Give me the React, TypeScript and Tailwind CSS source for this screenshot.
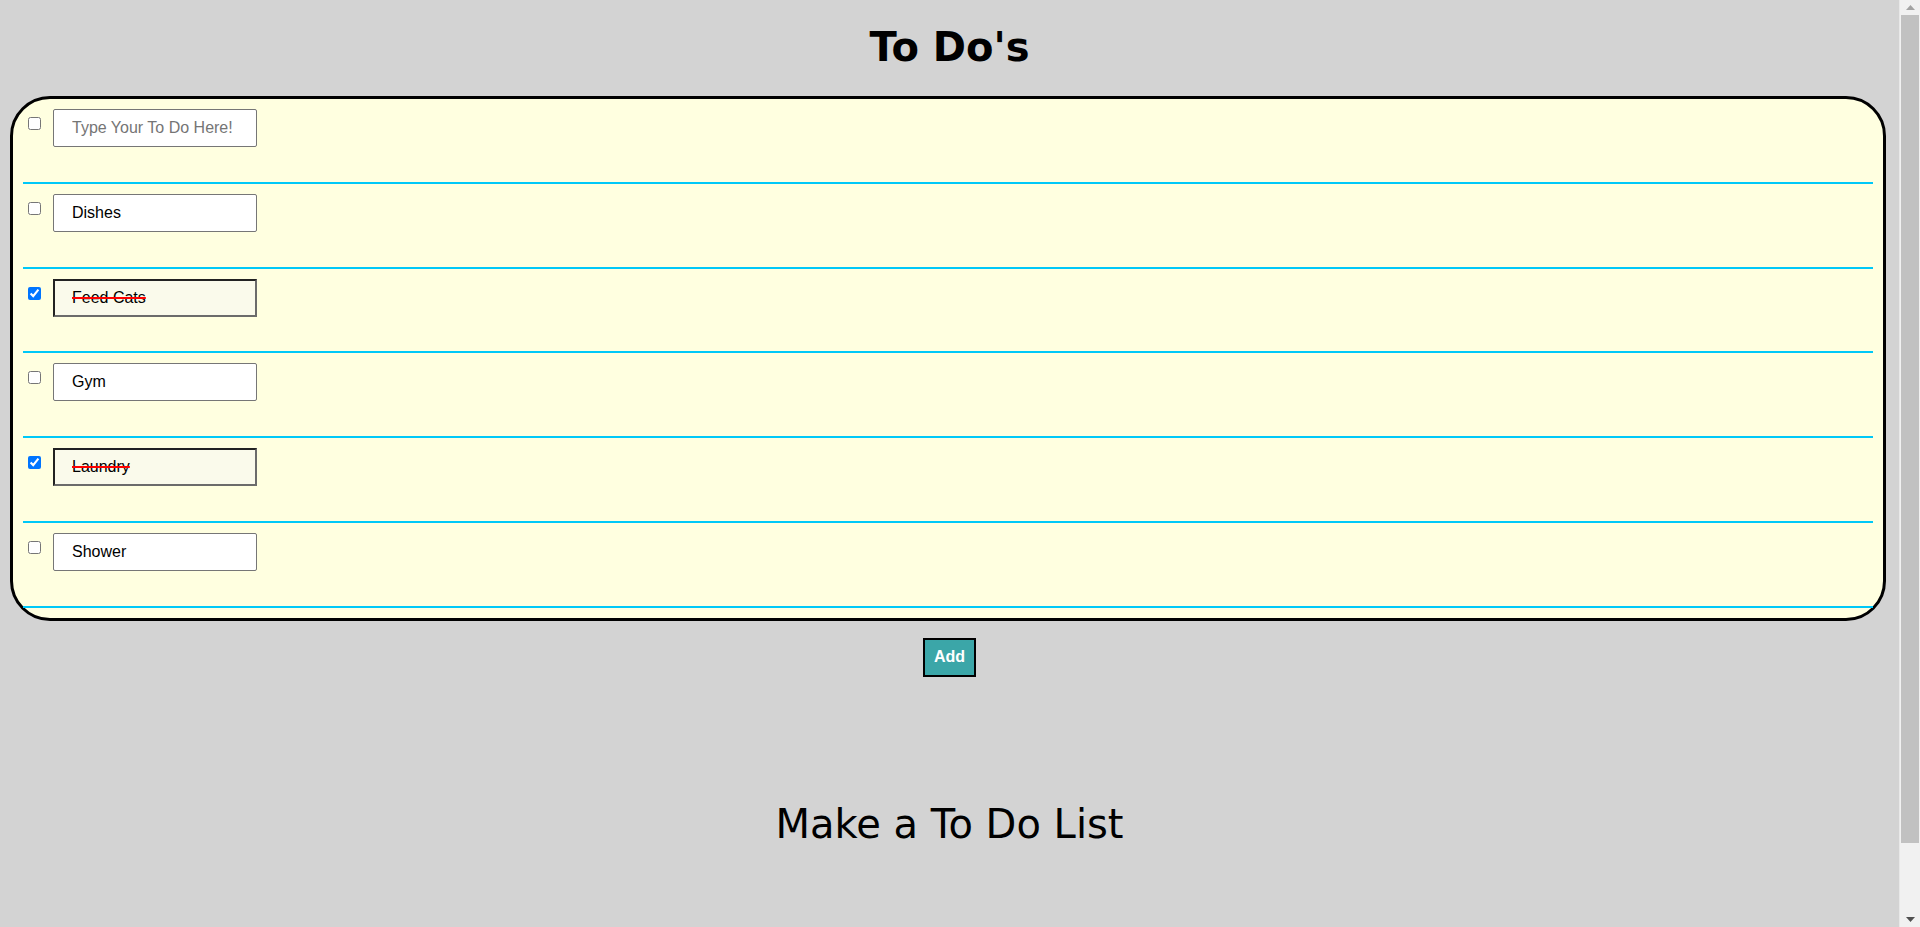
import React, { useState } from 'react';

interface Todo {
    id: number;
    text: string;
    done: boolean;
}

const START: Todo[] = [
    { id: 1, text: 'Dishes', done: false },
    { id: 2, text: 'Feed Cats', done: true },
    { id: 3, text: 'Gym', done: false },
    { id: 4, text: 'Laundry', done: true },
    { id: 5, text: 'Shower', done: false },
];

interface RowProps {
    todo?: Todo;
    onToggle?: () => void;
    onChange?: (text: string) => void;
}

const TodoRow = ({ todo, onToggle, onChange }: RowProps) => {
    const done = todo?.done ?? false;
    return (
        <div className="flex items-start pt-[10px] pb-[34.8px] border-b-2 border-[#00c8f8]">
            <input
                type="checkbox"
                checked={done}
                onChange={onToggle}
                className="m-0 mt-[8px] ml-[5px] w-[13px] h-[13px]"
            />
            <input
                type="text"
                value={todo ? todo.text : undefined}
                onChange={(e) => onChange && onChange(e.target.value)}
                placeholder={todo ? undefined : 'Type Your To Do Here!'}
                className={
                    done
                        ? 'ml-[12px] w-[204px] h-[38px] pl-[17px] border-2 border-t-[#222] border-l-[#222] border-b-[#6b6b6b] border-r-[#6b6b6b] bg-[#fafaeb] text-black text-[16px] font-["Liberation_Sans",Arial,sans-serif] line-through decoration-[#ff0000] decoration-2 outline-none'
                        : 'ml-[12px] w-[204px] h-[38px] pl-[18px] border border-[#767676] rounded-[2px] bg-white text-black text-[16px] font-["Liberation_Sans",Arial,sans-serif] placeholder:text-[#757575] outline-none'
                }
            />
        </div>
    );
};

// window scrollbar as it shows in the original
const ScrollStrip = () => (
    <div className="w-[21px] h-[927px] shrink-0 flex flex-col bg-[#f1f1f1] border-l border-[#e8e8e8]">
        <div className="h-[15px] flex items-center justify-center">
            <svg width="9" height="5" viewBox="0 0 9 5">
                <polygon points="0,5 9,5 4.5,0" fill="#a3a3a3" />
            </svg>
        </div>
        <div className="h-[828px] mx-[1px] bg-[#c1c1c1]" />
        <div className="flex-1" />
        <div className="h-[15px] flex items-center justify-center">
            <svg width="9" height="5" viewBox="0 0 9 5">
                <polygon points="0,0 9,0 4.5,5" fill="#505050" />
            </svg>
        </div>
    </div>
);

export default function App() {
    const [todos, setTodos] = useState<Todo[]>(START);

    const toggle = (id: number) =>
        setTodos(todos.map((t) => (t.id === id ? { ...t, done: !t.done } : t)));

    const edit = (id: number, text: string) =>
        setTodos(todos.map((t) => (t.id === id ? { ...t, text } : t)));

    return (
        <div className="flex items-start bg-[#d3d3d3]">
            <div className="flex-1 min-h-[1004px] flex flex-col items-center pt-[27px] pb-[161px] font-['DejaVu_Sans',Verdana,sans-serif] text-black">
                <h1 className="text-[40px] leading-[40px] font-bold">To Do's</h1>

                {/* list panel */}
                <div className="self-start ml-[10px] mt-[29px] w-[1876px] border-[3px] border-black rounded-[40px] bg-[#ffffe0] px-[10px] pb-[10px]">
                    <TodoRow />
                    {todos.map((t) => (
                        <TodoRow
                            key={t.id}
                            todo={t}
                            onToggle={() => toggle(t.id)}
                            onChange={(text) => edit(t.id, text)}
                        />
                    ))}
                </div>

                <button className="mt-[17px] w-[53px] h-[39px] border-2 border-black bg-[#3ba6a8] text-white font-bold text-[16px] font-['Liberation_Sans',Arial,sans-serif]">
                    Add
                </button>

                <p className="mt-[127px] text-[40px] leading-[40px]">Make a To Do List</p>
            </div>
            <ScrollStrip />
        </div>
    );
}
